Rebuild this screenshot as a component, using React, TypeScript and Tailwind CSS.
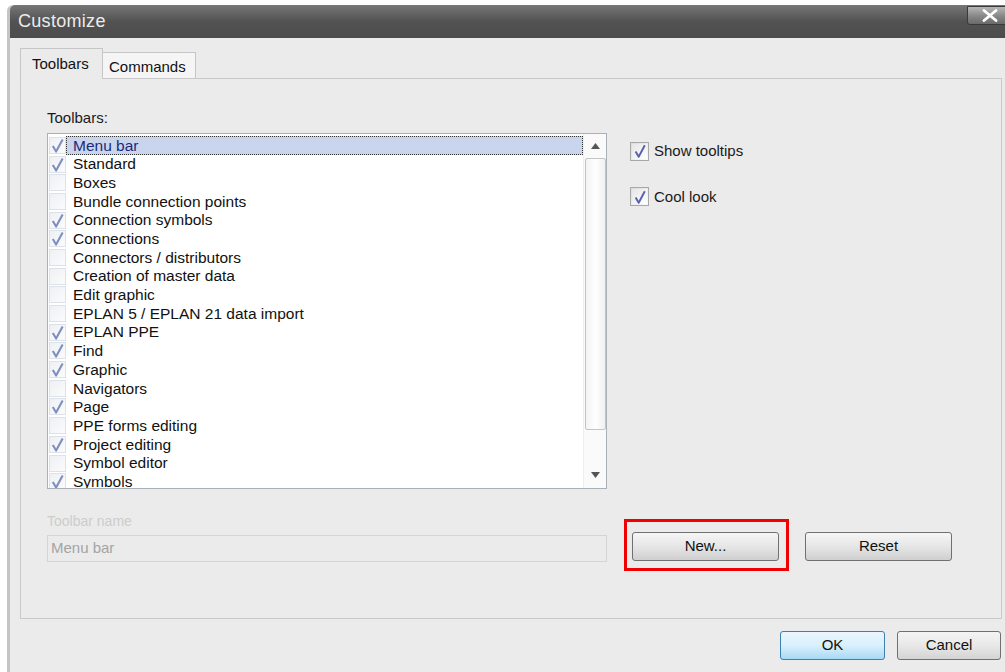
import React from 'react';

const toolbars = [
  { name: 'Menu bar', on: true },
  { name: 'Standard', on: true },
  { name: 'Boxes', on: false },
  { name: 'Bundle connection points', on: false },
  { name: 'Connection symbols', on: true },
  { name: 'Connections', on: true },
  { name: 'Connectors / distributors', on: false },
  { name: 'Creation of master data', on: false },
  { name: 'Edit graphic', on: false },
  { name: 'EPLAN 5 / EPLAN 21 data import', on: false },
  { name: 'EPLAN PPE', on: true },
  { name: 'Find', on: true },
  { name: 'Graphic', on: true },
  { name: 'Navigators', on: false },
  { name: 'Page', on: true },
  { name: 'PPE forms editing', on: false },
  { name: 'Project editing', on: true },
  { name: 'Symbol editor', on: false },
  { name: 'Symbols', on: true },
];

const Tick = ({ size, color }: { size: number; color: string }) => (
  <svg width={size} height={size} viewBox="0 0 16 16" className="block">
    <path d="M3 8.5 L6.5 14.5 L13.5 1.5" fill="none" stroke={color} strokeWidth="2.2" strokeLinejoin="round" />
  </svg>
);

const ListCheck = ({ on }: { on: boolean }) => (
  <div className="w-[17px] h-[17px] shrink-0 border border-[#dde1e8] bg-gradient-to-br from-[#eef0f4] to-[#fbfbfc] flex items-center justify-center">
    {on && <Tick size={15} color="#7e8fbf" />}
  </div>
);

const OptionCheck = ({ label }: { label: string }) => (
  <div className="flex items-center gap-[5px]">
    <div className="w-[19px] h-[19px] border border-[#a8a8a8] bg-gradient-to-br from-[#dcdcdc] to-[#fafafa] p-[1px]">
      <div className="w-full h-full bg-gradient-to-br from-[#e6e6e6] to-white flex items-center justify-center">
        <Tick size={14} color="#5b60ad" />
      </div>
    </div>
    <span className="text-[15px] text-[#1a1a1a]">{label}</span>
  </div>
);

const Button = ({ label, primary }: { label: string; primary?: boolean }) => (
  <button
    className={
      'h-[29px] rounded-[3px] border text-[15px] text-[#111] flex items-center justify-center ' +
      (primary
        ? 'w-[105px] border-[#3c7fb1] bg-gradient-to-b from-[#eaf6fd] via-[#d9f0fc] to-[#a7d9f5]'
        : 'w-[104px] border-[#707070] bg-gradient-to-b from-[#f4f4f4] via-[#e8e8e8] to-[#d4d4d4]')
    }
  >
    {label}
  </button>
);

const WideButton = ({ label }: { label: string }) => (
  <button className="w-[147px] h-[29px] rounded-[3px] border border-[#707070] bg-gradient-to-b from-[#f6f6f6] via-[#e6e6e6] to-[#cfcfcf] text-[15px] text-[#111] flex items-center justify-center">
    {label}
  </button>
);

export default function App() {
  return (
    <div
      className="w-[1005px] h-[672px] overflow-hidden bg-white pt-[5px] pl-[7px]"
      style={{ fontFamily: '"Liberation Sans", Arial, sans-serif' }}
    >
      <div className="w-[1010px] h-[700px] rounded-tl-[6px] bg-[#ebebeb] border-l-[3px] border-[#c4c4c4] flex flex-col">
        {/* title bar */}
        <div className="h-[33px] shrink-0 rounded-tl-[5px] bg-gradient-to-b from-[#777] via-[#525252] to-[#4c4c4c] flex items-center justify-between pl-[8px] pr-[5px]">
          <span className="text-[18px] text-[#ececec] tracking-[0.3px]">Customize</span>
          <div className="self-start mt-[1px] w-[45px] h-[19px] rounded-b-[3px] border border-[#3a3a3a] bg-gradient-to-b from-[#b8b8b8] via-[#8a8a8a] to-[#6a6a6a] flex items-center justify-center">
            <svg width="18" height="13" viewBox="0 0 18 13">
              <path d="M3 1.5 L15 11.5 M15 1.5 L3 11.5" stroke="white" strokeWidth="2.8" strokeLinecap="round" />
            </svg>
          </div>
        </div>

        <div className="pl-[10px] pt-[10px]">
          {/* tabs */}
          <div className="flex items-end h-[30px]">
            <div className="h-[31px] w-[83px] border border-b-0 border-[#c6c6c6] bg-[#ebebeb] text-[15px] text-[#111] pl-[11px] pt-[4px] relative z-10 -mb-[1px]">
              Toolbars
            </div>
            <div className="h-[26px] w-[93px] border border-l-0 border-b-0 border-[#c6c6c6] bg-[#f5f5f5] text-[15px] text-[#111] pl-[6px] pt-[3px]">
              Commands
            </div>
          </div>

          {/* tab page */}
          <div className="w-[982px] h-[541px] border border-[#c9c9c9] pl-[26px] pt-[30px]">
            <div className="text-[15px] text-[#1a1a1a] leading-[17px] mb-[7px]">Toolbars:</div>

            <div className="flex">
              <div className="w-[560px] h-[356px] border border-[#aab0b8] bg-white flex">
                <div className="flex-1 pl-[1px] pt-[2px] overflow-hidden">
                  {toolbars.map((t, i) => (
                    <div key={t.name} className="h-[18.7px] flex items-center">
                      <ListCheck on={t.on} />
                      <div
                        className={
                          'flex-1 h-full flex items-center pl-[6px] text-[15.5px] leading-none ' +
                          (i === 0
                            ? 'bg-[#c8d5ec] text-[#1c2a7a] border border-dotted border-[#333]'
                            : 'border border-transparent text-[#111]')
                        }
                      >
                        {t.name}
                      </div>
                    </div>
                  ))}
                </div>
                {/* scrollbar */}
                <div className="w-[23px] shrink-0 bg-[#fafafa] border-l border-[#efefef] flex flex-col items-center">
                  <div className="h-[24px] flex items-center justify-center">
                    <svg width="9" height="6" viewBox="0 0 9 6">
                      <path d="M0 6 L4.5 0 L9 6 Z" fill="#555" />
                    </svg>
                  </div>
                  <div className="w-[21px] h-[272px] rounded-[2px] border border-[#c4c4c4] bg-gradient-to-r from-[#f3f3f3] via-white to-[#f0f0f0]" />
                  <div className="flex-1 flex items-end justify-center pb-[10px]">
                    <svg width="9" height="6" viewBox="0 0 9 6">
                      <path d="M0 0 L9 0 L4.5 6 Z" fill="#555" />
                    </svg>
                  </div>
                </div>
              </div>

              <div className="ml-[23px] pt-[7px] flex flex-col gap-[23px]">
                <OptionCheck label="Show tooltips" />
                <OptionCheck label="Cool look" />
              </div>
            </div>

            <div className="flex mt-[24px]">
              <div className="w-[560px]">
                <div className="text-[14px] leading-[16px] text-[#cdcdcd]">Toolbar name</div>
                <div className="mt-[6px] h-[27px] border border-[#d4d4d4] flex items-center pl-[3px] text-[15px] text-[#a4a4a4]">
                  Menu bar
                </div>
              </div>
              <div className="ml-[17px] mt-[6px] border-[3px] border-[#f00000] pl-[5px] pr-[7px] pt-[10px] pb-[7px]">
                <WideButton label="New..." />
              </div>
              <div className="ml-[16px] mt-[19px]">
                <WideButton label="Reset" />
              </div>
            </div>
          </div>

          {/* dialog buttons */}
          <div className="w-[982px] flex justify-end gap-[12px] mt-[12px] pr-[1px]">
            <Button label="OK" primary />
            <Button label="Cancel" />
          </div>
        </div>
      </div>
    </div>
  );
}
